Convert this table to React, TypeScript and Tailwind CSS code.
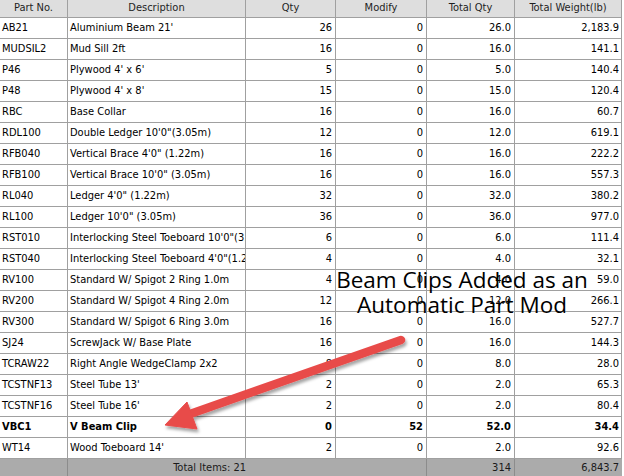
import React from "react";

type Row = [string, string, string, string, string, string];

const rows: Row[] = [
  ["AB21", "Aluminium Beam 21'", "26", "0", "26.0", "2,183.9"],
  ["MUDSIL2", "Mud Sill 2ft", "16", "0", "16.0", "141.1"],
  ["P46", "Plywood 4' x 6'", "5", "0", "5.0", "140.4"],
  ["P48", "Plywood 4' x 8'", "15", "0", "15.0", "120.4"],
  ["RBC", "Base Collar", "16", "0", "16.0", "60.7"],
  ["RDL100", "Double Ledger 10'0\"(3.05m)", "12", "0", "12.0", "619.1"],
  ["RFB040", "Vertical Brace 4'0\" (1.22m)", "16", "0", "16.0", "222.2"],
  ["RFB100", "Vertical Brace 10'0\" (3.05m)", "16", "0", "16.0", "557.3"],
  ["RL040", "Ledger 4'0\" (1.22m)", "32", "0", "32.0", "380.2"],
  ["RL100", "Ledger 10'0\" (3.05m)", "36", "0", "36.0", "977.0"],
  ["RST010", "Interlocking Steel Toeboard 10'0\"(3.05m)", "6", "0", "6.0", "111.4"],
  ["RST040", "Interlocking Steel Toeboard 4'0\"(1.22m)", "4", "0", "4.0", "32.1"],
  ["RV100", "Standard W/ Spigot 2 Ring 1.0m", "4", "0", "4.0", "59.0"],
  ["RV200", "Standard W/ Spigot 4 Ring 2.0m", "12", "0", "12.0", "266.1"],
  ["RV300", "Standard W/ Spigot 6 Ring 3.0m", "16", "0", "16.0", "527.7"],
  ["SJ24", "ScrewJack W/ Base Plate", "16", "0", "16.0", "144.3"],
  ["TCRAW22", "Right Angle WedgeClamp 2x2", "8", "0", "8.0", "28.0"],
  ["TCSTNF13", "Steel Tube 13'", "2", "0", "2.0", "65.3"],
  ["TCSTNF16", "Steel Tube 16'", "2", "0", "2.0", "80.4"],
  ["VBC1", "V Beam Clip", "0", "52", "52.0", "34.4"],
  ["WT14", "Wood Toeboard 14'", "2", "0", "2.0", "92.6"],
];

const headers = ["Part No.", "Description", "Qty", "Modify", "Total Qty", "Total Weight(lb)"];

const font = { fontFamily: '"DejaVu Sans Condensed", "DejaVu Sans", sans-serif', fontStretch: "condensed" as const };

export default function App() {
  return (
    <div className="relative w-[624px] h-[476px] overflow-hidden bg-white">
      <div
        className="grid w-[622px] grid-cols-[68px_178px_90px_91px_88px_107px] border-r border-[#a0a0a0] text-[11px] text-black"
        style={font}
      >
        {headers.map((h) => (
          <div
            key={h}
            className="flex h-[18px] items-center justify-center border-r border-b border-[#a0a0a0] bg-[#dedede] text-[#1e1e1e] last:border-r-0"
          >
            {h}
          </div>
        ))}
        {rows.map((r) => {
          const bold = r[0] === "VBC1";
          return r.map((c, i) => (
            <div
              key={r[0] + i}
              className={
                "flex h-[21px] items-center overflow-hidden whitespace-nowrap border-b border-[#a0a0a0] " +
                (i === 5 ? "" : "border-r ") +
                (i < 2 ? "justify-start pl-[2px] " : "justify-end pr-[3px] ") +
                (bold ? "font-bold" : "")
              }
            >
              {c}
            </div>
          ));
        })}
        <div className="h-[18px] border-r border-[#8c8c8c] bg-[#ababab]" />
        <div className="flex h-[18px] items-center justify-end bg-[#ababab] pr-0 text-[#1a1a1a]">
          Total Items: 21
        </div>
        <div className="h-[18px] bg-[#ababab]" />
        <div className="h-[18px] border-r border-[#8c8c8c] bg-[#ababab]" />
        <div className="flex h-[18px] items-center justify-end border-r border-[#8c8c8c] bg-[#ababab] pr-[3px] text-[#1a1a1a]">
          314
        </div>
        <div className="flex h-[18px] items-center justify-end bg-[#ababab] pr-[3px] text-[#1a1a1a]">
          6,843.7
        </div>
      </div>

      <div
        className="absolute left-[322px] top-[267px] w-[280px] text-center text-[22.5px] leading-[25px] text-black"
        style={{ fontFamily: '"Open Sans", sans-serif' }}
      >
        Beam Clips Added as an
        <br />
        Automatic Part Mod
      </div>

      <svg className="pointer-events-none absolute left-0 top-0" width="624" height="476">
        <defs>
          <filter id="sh" x="-20%" y="-20%" width="140%" height="160%">
            <feDropShadow dx="1.5" dy="3" stdDeviation="1.6" floodColor="#000" floodOpacity="0.35" />
          </filter>
        </defs>
        <g filter="url(#sh)" fill="#e84b4a" stroke="#e84b4a">
          <line x1="401" y1="340" x2="190" y2="414" strokeWidth="8.5" strokeLinecap="round" />
          <polygon points="187,402 165,425 197,429" strokeWidth="1" strokeLinejoin="round" />
        </g>
      </svg>
    </div>
  );
}
